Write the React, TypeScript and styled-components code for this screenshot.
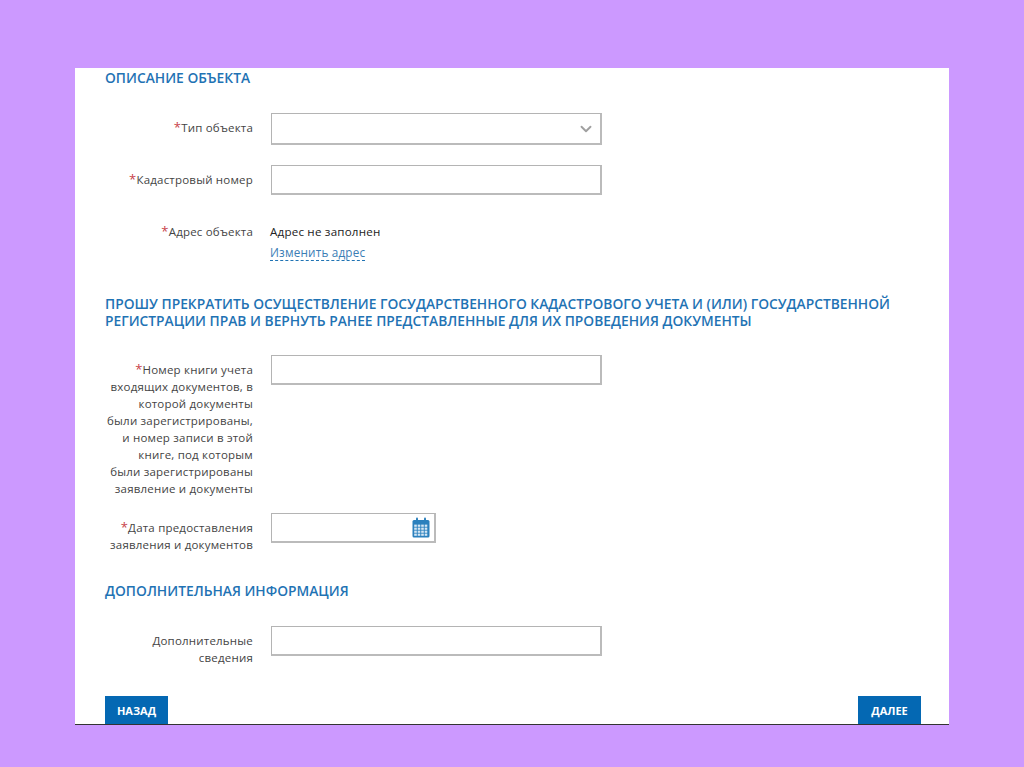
import { createGlobalStyle, styled } from 'styled-components'
import { ChevronDown } from 'lucide-react'

const GlobalStyle = createGlobalStyle`
  html, body {
    margin: 0;
    padding: 0;
    background: #cc99ff;
  }
  body {
    font-family: "Open Sans", "Liberation Sans", sans-serif;
  }
`

function CalendarIcon() {
  return (
    <svg width="18" height="21" viewBox="0 0 18 21" fill="none">
      <rect x="0.5" y="3" width="17" height="17.5" rx="1.5" fill="#2b80bd" />
      <rect x="4" y="0.5" width="2" height="5" rx="1" fill="#2b80bd" />
      <rect x="12" y="0.5" width="2" height="5" rx="1" fill="#2b80bd" />
      {[0, 1, 2, 3].map((row) =>
        [0, 1, 2, 3].map((col) => (
          <rect key={`${row}-${col}`} x={2.2 + col * 3.5} y={7.6 + row * 3} width="2.6" height="2.2" fill="#d5e7f4" />
        )),
      )}
    </svg>
  )
}

export default function App() {
  return (
    <>
      <GlobalStyle />
      <Page>
        <Sheet>
          <Heading>Описание объекта</Heading>
          <Row $top={27}>
            <Label><Star>*</Star>Тип объекта</Label>
            <Select>
              <ChevronDown size={18} color="#a0a0a0" strokeWidth={2.5} />
            </Select>
          </Row>
          <Row $top={20}>
            <Label><Star>*</Star>Кадастровый номер</Label>
            <Input />
          </Row>
          <Row $top={22}>
            <Label><Star>*</Star>Адрес объекта</Label>
            <AddressCol>
              <AddressText>Адрес не заполнен</AddressText>
              <ChangeLink>Изменить адрес</ChangeLink>
            </AddressCol>
          </Row>
          <Heading $top={34}>
            Прошу прекратить осуществление государственного кадастрового учета и (или) государственной
            регистрации прав и вернуть ранее представленные для их проведения документы
          </Heading>
          <Row $top={26}>
            <Label>
              <Star>*</Star>Номер книги учета входящих документов, в которой документы были зарегистрированы,
              и номер записи в этой книге, под которым были зарегистрированы заявление и документы
            </Label>
            <Input />
          </Row>
          <Row $top={16}>
            <Label><Star>*</Star>Дата предоставления заявления и документов</Label>
            <DateField>
              <CalendarIcon />
            </DateField>
          </Row>
          <Heading $top={29}>Дополнительная информация</Heading>
          <Row $top={27}>
            <Label>Дополнительные сведения</Label>
            <Input />
          </Row>
          <Footer>
            <ActionButton>Назад</ActionButton>
            <ActionButton>Далее</ActionButton>
          </Footer>
        </Sheet>
      </Page>
    </>
  )
}

const Page = styled.div`
  width: 1024px;
  height: 767px;
  padding: 68px 75px 0;
  box-sizing: border-box;
  background: #cc99ff;
  overflow: hidden;
`

const Sheet = styled.div`
  display: flex;
  flex-direction: column;
  width: 874px;
  height: 657px;
  box-sizing: border-box;
  padding: 0 28px 0 30px;
  background: #fff;
  border-bottom: 1px solid #333;
`

const Heading = styled.h2<{ $top?: number }>`
  margin: ${(p) => p.$top ?? 1}px 0 0;
  font-size: 13.8px;
  line-height: 17px;
  font-weight: 600;
  color: #1f73b4;
  text-transform: uppercase;
`

const Row = styled.div<{ $top: number }>`
  display: grid;
  grid-template-columns: 148px 331px;
  column-gap: 18px;
  align-items: start;
  margin: ${(p) => p.$top}px 0 0;
`

const Label = styled.div`
  padding-top: 6px;
  font-size: 11.5px;
  line-height: 17px;
  letter-spacing: 0.2px;
  color: #444;
  text-align: right;
`

const Star = styled.span`
  font-size: 13px;
  line-height: 0;
  color: #c8424a;
`

const Input = styled.div`
  height: 30px;
  box-sizing: border-box;
  background: #fff;
  border: 1px solid #b4b4b4;
  border-bottom: 2px solid #bbb;
  border-right: 2px solid #bbb;
`

const Select = styled(Input)`
  height: 32px;
  display: flex;
  align-items: center;
  justify-content: flex-end;
  padding-right: 5px;
`

const DateField = styled(Input)`
  width: 165px;
  display: flex;
  align-items: center;
  justify-content: flex-end;
  padding-right: 4px;
`

const AddressCol = styled.div`
  display: flex;
  flex-direction: column;
  align-items: flex-start;
  padding-top: 6px;
  margin-left: -1px;
`

const AddressText = styled.div`
  font-size: 11.6px;
  line-height: 17px;
  letter-spacing: 0.2px;
  color: #222;
`

const ChangeLink = styled.a`
  margin-top: 5px;
  font-size: 11.7px;
  line-height: 15px;
  letter-spacing: 0.2px;
  color: #3b7db5;
  border-bottom: 1px dashed #1f73b4;
`

const Footer = styled.div`
  margin-top: auto;
  display: flex;
  justify-content: space-between;
`

const ActionButton = styled.button`
  width: 63px;
  height: 28px;
  padding: 0;
  border: 0;
  background: #0468b3;
  color: #fff;
  font-family: inherit;
  font-size: 11px;
  font-weight: 700;
  text-transform: uppercase;
`
